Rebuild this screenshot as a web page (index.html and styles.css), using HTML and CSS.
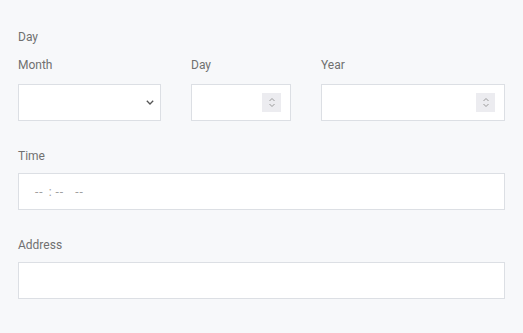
FILE: index.html
```html
<!DOCTYPE html>
<html lang="en">
<head>
    <meta charset="UTF-8">
    <meta name="viewport" content="width=device-width, initial-scale=1.0">
    <title>Date form</title>
    <link rel="stylesheet" href="styles.css">
</head>
<body>

    <form class="form">
        <fieldset class="group">
            <legend class="legend">Day</legend>
            <div class="date-row">
                <div class="field">
                    <label class="label" for="month">Month</label>
                    <div class="select-wrap">
                        <select id="month" class="input select">
                            <option></option>
                        </select>
                        <svg class="chevron" width="8" height="5" viewBox="0 0 8 5"><path d="M0.8 0.8l3.2 3.2 3.2-3.2" fill="none" stroke="#555" stroke-width="1.3"/></svg>
                    </div>
                </div>
                <div class="field">
                    <label class="label" for="day">Day</label>
                    <div class="number-wrap">
                        <input id="day" class="input number" type="text">
                        <span class="spin"><svg width="8" height="13" viewBox="0 0 8 13"><path d="M1.5 5l2.5-2.5 2.5 2.5M1.5 8l2.5 2.5 2.5-2.5" fill="none" stroke="#9a9a9a" stroke-width="1"/></svg></span>
                    </div>
                </div>
                <div class="field">
                    <label class="label" for="year">Year</label>
                    <div class="number-wrap">
                        <input id="year" class="input number" type="text">
                        <span class="spin"><svg width="8" height="13" viewBox="0 0 8 13"><path d="M1.5 5l2.5-2.5 2.5 2.5M1.5 8l2.5 2.5 2.5-2.5" fill="none" stroke="#9a9a9a" stroke-width="1"/></svg></span>
                    </div>
                </div>
            </div>
        </fieldset>

        <div class="field block">
            <label class="label" for="time">Time</label>
            <div class="input time">
                <span class="dash">--</span><span class="colon">:</span><span class="dash">--</span><span class="dash ampm">--</span>
            </div>
        </div>

        <div class="field block">
            <label class="label" for="address">Address</label>
            <input id="address" class="input" type="text">
        </div>
    </form>

</body>
</html>
```

FILE: styles.css
```css
body {
    margin: 0;
    background-color: #f7f8fa;
    font-family: Roboto, "Liberation Sans", sans-serif;
    font-size: 12px;
    color: #707070;
}

.form {
    width: 487px;
    padding: 29px 18px 0;
}

.group {
    border: 0;
    margin: 0;
    padding: 0;
}

.legend {
    padding: 0;
    line-height: 16px;
    margin-bottom: 12px;
}

.date-row {
    display: grid;
    grid-template-columns: 143px 100px 1fr;
    gap: 30px;
}

.field {
    display: flex;
    flex-direction: column;
}

.label {
    line-height: 16px;
    margin-bottom: 11px;
}

.field.block {
    margin-top: 27px;
}

.field.block .label {
    margin-bottom: 9px;
}

.input {
    box-sizing: border-box;
    height: 37px;
    width: 100%;
    border: 1px solid #dcdfe4;
    background: #fff;
    border-radius: 0;
    font-family: inherit;
    font-size: 12px;
    color: #444;
    padding: 0 12px;
    outline: none;
}

.select-wrap,
.number-wrap {
    position: relative;
}

.select {
    appearance: none;
}

.chevron {
    position: absolute;
    right: 7px;
    top: 16px;
    pointer-events: none;
}

.spin {
    position: absolute;
    right: 10px;
    top: 9px;
    width: 19px;
    height: 19px;
    background: #ececf0;
    display: flex;
    align-items: center;
    justify-content: center;
}

.time {
    display: flex;
    align-items: center;
    padding-left: 16px;
    color: #a0a0a0;
}

.dash {
    letter-spacing: 1px;
}

.colon {
    margin: 0 4px 0 5px;
}

.ampm {
    margin-left: 11px;
}
```
